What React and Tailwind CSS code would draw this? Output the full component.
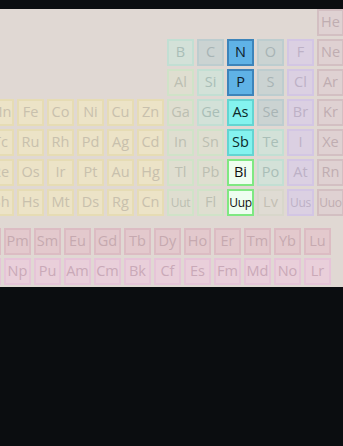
// Periodic table detail, group 15 (pnictogens) highlighted

const CAT = {
  tm: 'bg-[#ece3c7] border-[#e6dcb4] text-[#c8c0ad]',
  post: 'bg-[#dfded0] border-[#d0e3c8] text-[#bcbfb2]',
  metalloid: 'bg-[#d3e1d8] border-[#c2dfd3] text-[#a9beb7]',
  nonmetal: 'bg-[#cbd3d2] border-[#bdcdcf] text-[#a8b4b5]',
  halogen: 'bg-[#dbd0e2] border-[#d3c6e4] text-[#bdb1c6]',
  noble: 'bg-[#dfd1d2] border-[#d3bfc2] text-[#bfadb1]',
  unknown: 'bg-[#dfdbd3] border-[#d8d7cb] text-[#c3bfb4]',
  lan: 'bg-[#e3c9cd] border-[#dcbcc3] text-[#c6a9b0]',
  act: 'bg-[#e9cfda] border-[#e6c4d8] text-[#c9a9b8]',
  blue: 'bg-[#5fb2e6] border-[#3c84ba] text-[#0c1c2b]',
  cyan: 'bg-[#84f3ef] border-[#63d5d2] text-[#0d2b2b]',
  mint: 'bg-[#eefef0] border-[#7fe882] text-[#111111]',
};

// visible part of the table starts at group 7 (partly cut off at the left edge)
// [symbol, group, category]
const TOP = [
  [['He', 18, 'noble']],
  [['B', 13, 'metalloid'], ['C', 14, 'nonmetal'], ['N', 15, 'blue'], ['O', 16, 'nonmetal'], ['F', 17, 'halogen'], ['Ne', 18, 'noble']],
  [['Al', 13, 'post'], ['Si', 14, 'metalloid'], ['P', 15, 'blue'], ['S', 16, 'nonmetal'], ['Cl', 17, 'halogen'], ['Ar', 18, 'noble']],
];

const LOWER = [
  'Mn Fe Co Ni Cu Zn Ga Ge As Se Br Kr',
  'Tc Ru Rh Pd Ag Cd In Sn Sb Te I Xe',
  'Re Os Ir Pt Au Hg Tl Pb Bi Po At Rn',
  'Bh Hs Mt Ds Rg Cn Uut Fl Uup Lv Uus Uuo',
];

const TAIL = [
  ['post', 'metalloid', 'cyan', 'nonmetal', 'halogen', 'noble'],
  ['post', 'post', 'cyan', 'metalloid', 'halogen', 'noble'],
  ['post', 'post', 'mint', 'metalloid', 'halogen', 'noble'],
  ['post', 'post', 'mint', 'unknown', 'halogen', 'noble'],
];

const rows = [
  ...TOP,
  ...LOWER.map((line, i) =>
    line.split(' ').map((s, j) => [s, 7 + j, j < 6 ? 'tm' : TAIL[i][j - 6]])
  ),
];

const LAN = 'Nd Pm Sm Eu Gd Tb Dy Ho Er Tm Yb Lu'.split(' ');
const ACT = 'U Np Pu Am Cm Bk Cf Es Fm Md No Lr'.split(' ');

function Cell({ sym, cat, col, row }) {
  return (
    <div
      className={`flex items-center justify-center border-2 ${CAT[cat]} ${sym.length > 2 ? 'text-[12px] tracking-[-0.3px]' : 'text-[14.5px]'}`}
      style={{ gridColumn: col, gridRow: row }}
    >
      {sym}
    </div>
  );
}

export default function App() {
  return (
    <div className="w-[343px] h-[446px] bg-[#0b0d10] overflow-hidden" style={{ fontFamily: '"Open Sans", "DejaVu Sans", sans-serif' }}>
      <div className="h-[9px]" />
      <div className="h-[278px] bg-[#e0d8d3] overflow-hidden">
        <div className="grid grid-cols-[repeat(12,27px)] auto-rows-[27px] gap-[3px] ml-[-13px] w-[357px] leading-none">
          {rows.map((row, r) =>
            row.map(([sym, g, cat]) => <Cell key={sym} sym={sym} cat={cat} col={g - 6} row={r + 1} />)
          )}
        </div>
        <div className="grid grid-cols-[repeat(12,27px)] auto-rows-[27px] gap-[3px] ml-[-26px] mt-[12px] w-[357px] leading-none">
          {LAN.map((s, i) => <Cell key={s} sym={s} cat="lan" col={i + 1} row={1} />)}
          {ACT.map((s, i) => <Cell key={s} sym={s} cat="act" col={i + 1} row={2} />)}
        </div>
      </div>
    </div>
  );
}
